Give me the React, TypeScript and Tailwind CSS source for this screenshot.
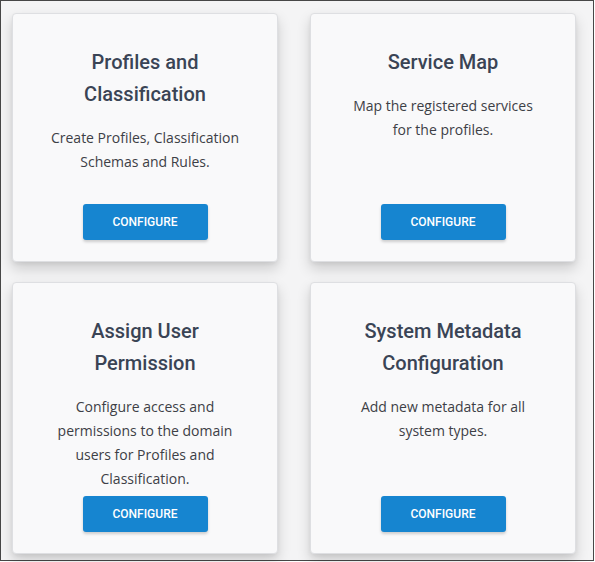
const cards = [
  {
    title: "Profiles and Classification",
    text: "Create Profiles, Classification Schemas and Rules.",
  },
  {
    title: "Service Map",
    text: "Map the registered services for the profiles.",
  },
  {
    title: "Assign User Permission",
    text: "Configure access and permissions to the domain users for Profiles and Classification.",
  },
  {
    title: "System Metadata Configuration",
    text: "Add new metadata for all system types.",
  },
];

const ConfigCard = ({ title, text }: { title: string; text: string }) => {
  return (
    <div className="flex flex-col items-center min-h-[249px] px-9 pt-8 pb-[21px] bg-[#f9f9fa] border border-[#dedfe2] rounded-[4px] shadow-[0_7px_14px_rgba(0,0,0,0.16),0_2px_4px_rgba(0,0,0,0.06)] text-center">
      <h2 className="font-['Roboto',sans-serif] font-medium text-[20px] leading-[32px] text-[#3a4455]">
        {title}
      </h2>
      <p className="mt-4 font-['Open_Sans',sans-serif] text-[14px] leading-[24px] text-[#3d4046]">
        {text}
      </p>
      <div className="mt-auto pt-[5px]">
        <button className="w-[125px] h-9 rounded-[3px] bg-[#1685d0] text-white font-['Roboto',sans-serif] font-medium text-[12px] uppercase shadow-[0_2px_3px_rgba(0,0,0,0.18)]">
          Configure
        </button>
      </div>
    </div>
  );
};

export default function App() {
  return (
    <div className="w-[595px] h-[562px] bg-white">
      <div className="w-[594px] h-[561px] border border-[#474747] bg-[#f4f4f5] pl-[11px] pt-3">
        <div className="grid grid-cols-[266px_266px] gap-x-8 gap-y-5">
          {cards.map((c) => (
            <ConfigCard key={c.title} title={c.title} text={c.text} />
          ))}
        </div>
      </div>
    </div>
  );
}
